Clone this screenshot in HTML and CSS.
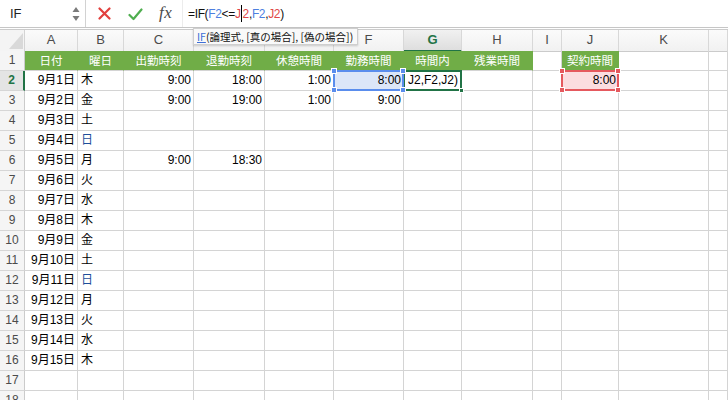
FILE: index.html
```html
<!DOCTYPE html>
<html lang="ja">
<head>
<meta charset="utf-8">
<link rel="stylesheet" href="styles.css">
</head>
<body>
<div class="toolbar">
  <div class="namebox">
    <span class="nb-text">IF</span>
    <svg class="spin" width="8" height="16" viewBox="0 0 8 16"><polygon points="4,1 7.5,6 0.5,6" fill="#7a7a7a"/><polygon points="0.5,10 7.5,10 4,15" fill="#7a7a7a"/></svg>
  </div>
  <div class="icons">
    <svg class="ic-x" width="13" height="13" viewBox="0 0 13 13"><path d="M1.5 1.5 L11.5 11.5 M11.5 1.5 L1.5 11.5" stroke="#e2403e" stroke-width="2.2" stroke-linecap="round"/></svg>
    <svg class="ic-ok" width="15" height="13" viewBox="0 0 15 13"><path d="M1.5 7 L5.5 11 L13.5 1.5" stroke="#4fae4f" stroke-width="2.2" fill="none" stroke-linecap="round" stroke-linejoin="round"/></svg>
    <span class="fx">fx</span>
  </div>
  <div class="formula">=IF(<span class="rb">F2</span>&lt;=<span class="rr">J<i class="caret"></i>2</span>,<span class="rb">F2</span>,<span class="rr">J2</span>)</div>
</div>
<div class="tip"><span class="tip-fn">IF</span>(論理式, [真の場合], [偽の場合])</div>
<div class="sheet">
  <div class="row colhdr">
    <span class="corner"><svg width="25" height="20" viewBox="0 0 25 20"><polygon points="23,3 23,19 9,19" fill="#d9d9d9"/></svg></span>
    <span class="ch">A</span><span class="ch">B</span><span class="ch">C</span><span class="ch">D</span><span class="ch">E</span><span class="ch">F</span><span class="ch act">G</span><span class="ch">H</span><span class="ch">I</span><span class="ch">J</span><span class="ch">K</span><span class="ch"></span>
  </div>
  <div class="row"><span class="rh">1</span><span class="c g">日付</span><span class="c g">曜日</span><span class="c g">出勤時刻</span><span class="c g">退勤時刻</span><span class="c g">休憩時間</span><span class="c g">勤務時間</span><span class="c g">時間内</span><span class="c g">残業時間</span><span class="c"></span><span class="c g">契約時間</span><span class="c"></span><span class="c"></span></div>
  <div class="row"><span class="rh act">2</span><span class="c rt">9月1日</span><span class="c">木</span><span class="c rt">9:00</span><span class="c rt">18:00</span><span class="c rt">1:00</span><span class="c rt selb">8:00<i class="hd tl"></i><i class="hd tr"></i><i class="hd bl"></i><i class="hd br"></i></span><span class="c edit">J2,F2,J2)<i class="fill"></i></span><span class="c"></span><span class="c"></span><span class="c rt selr">8:00<i class="hd tl"></i><i class="hd tr"></i><i class="hd bl"></i><i class="hd br"></i></span><span class="c"></span><span class="c"></span></div>
  <div class="row"><span class="rh">3</span><span class="c rt">9月2日</span><span class="c">金</span><span class="c rt">9:00</span><span class="c rt">19:00</span><span class="c rt">1:00</span><span class="c rt">9:00</span><span class="c"></span><span class="c"></span><span class="c"></span><span class="c"></span><span class="c"></span><span class="c"></span></div>
  <div class="row"><span class="rh">4</span><span class="c rt">9月3日</span><span class="c">土</span><span class="c"></span><span class="c"></span><span class="c"></span><span class="c"></span><span class="c"></span><span class="c"></span><span class="c"></span><span class="c"></span><span class="c"></span><span class="c"></span></div>
  <div class="row"><span class="rh">5</span><span class="c rt">9月4日</span><span class="c sun">日</span><span class="c"></span><span class="c"></span><span class="c"></span><span class="c"></span><span class="c"></span><span class="c"></span><span class="c"></span><span class="c"></span><span class="c"></span><span class="c"></span></div>
  <div class="row"><span class="rh">6</span><span class="c rt">9月5日</span><span class="c">月</span><span class="c rt">9:00</span><span class="c rt">18:30</span><span class="c"></span><span class="c"></span><span class="c"></span><span class="c"></span><span class="c"></span><span class="c"></span><span class="c"></span><span class="c"></span></div>
  <div class="row"><span class="rh">7</span><span class="c rt">9月6日</span><span class="c">火</span><span class="c"></span><span class="c"></span><span class="c"></span><span class="c"></span><span class="c"></span><span class="c"></span><span class="c"></span><span class="c"></span><span class="c"></span><span class="c"></span></div>
  <div class="row"><span class="rh">8</span><span class="c rt">9月7日</span><span class="c">水</span><span class="c"></span><span class="c"></span><span class="c"></span><span class="c"></span><span class="c"></span><span class="c"></span><span class="c"></span><span class="c"></span><span class="c"></span><span class="c"></span></div>
  <div class="row"><span class="rh">9</span><span class="c rt">9月8日</span><span class="c">木</span><span class="c"></span><span class="c"></span><span class="c"></span><span class="c"></span><span class="c"></span><span class="c"></span><span class="c"></span><span class="c"></span><span class="c"></span><span class="c"></span></div>
  <div class="row"><span class="rh">10</span><span class="c rt">9月9日</span><span class="c">金</span><span class="c"></span><span class="c"></span><span class="c"></span><span class="c"></span><span class="c"></span><span class="c"></span><span class="c"></span><span class="c"></span><span class="c"></span><span class="c"></span></div>
  <div class="row"><span class="rh">11</span><span class="c rt">9月10日</span><span class="c">土</span><span class="c"></span><span class="c"></span><span class="c"></span><span class="c"></span><span class="c"></span><span class="c"></span><span class="c"></span><span class="c"></span><span class="c"></span><span class="c"></span></div>
  <div class="row"><span class="rh">12</span><span class="c rt">9月11日</span><span class="c sun">日</span><span class="c"></span><span class="c"></span><span class="c"></span><span class="c"></span><span class="c"></span><span class="c"></span><span class="c"></span><span class="c"></span><span class="c"></span><span class="c"></span></div>
  <div class="row"><span class="rh">13</span><span class="c rt">9月12日</span><span class="c">月</span><span class="c"></span><span class="c"></span><span class="c"></span><span class="c"></span><span class="c"></span><span class="c"></span><span class="c"></span><span class="c"></span><span class="c"></span><span class="c"></span></div>
  <div class="row"><span class="rh">14</span><span class="c rt">9月13日</span><span class="c">火</span><span class="c"></span><span class="c"></span><span class="c"></span><span class="c"></span><span class="c"></span><span class="c"></span><span class="c"></span><span class="c"></span><span class="c"></span><span class="c"></span></div>
  <div class="row"><span class="rh">15</span><span class="c rt">9月14日</span><span class="c">水</span><span class="c"></span><span class="c"></span><span class="c"></span><span class="c"></span><span class="c"></span><span class="c"></span><span class="c"></span><span class="c"></span><span class="c"></span><span class="c"></span></div>
  <div class="row"><span class="rh">16</span><span class="c rt">9月15日</span><span class="c">木</span><span class="c"></span><span class="c"></span><span class="c"></span><span class="c"></span><span class="c"></span><span class="c"></span><span class="c"></span><span class="c"></span><span class="c"></span><span class="c"></span></div>
  <div class="row"><span class="rh">17</span><span class="c"></span><span class="c"></span><span class="c"></span><span class="c"></span><span class="c"></span><span class="c"></span><span class="c"></span><span class="c"></span><span class="c"></span><span class="c"></span><span class="c"></span><span class="c"></span></div>
  <div class="row"><span class="rh">18</span><span class="c"></span><span class="c"></span><span class="c"></span><span class="c"></span><span class="c"></span><span class="c"></span><span class="c"></span><span class="c"></span><span class="c"></span><span class="c"></span><span class="c"></span><span class="c"></span></div>
</div>
</body>
</html>
```
FILE: styles.css
```css
* { box-sizing: border-box; }
html, body { margin: 0; padding: 0; background: #fff; }
body {
  width: 728px; height: 400px; overflow: hidden; position: relative;
  font-family: "Liberation Sans", "Noto Sans CJK JP", sans-serif;
  color: #000;
}
.toolbar {
  height: 28px; display: flex; align-items: stretch;
  border-bottom: 1px solid #c6c6c6; background: #fff;
}
.namebox {
  width: 86px; border-right: 1px solid #d2d2d2;
  display: flex; align-items: center; justify-content: space-between;
  padding: 0 5px 0 10px;
}
.nb-text { font-size: 13px; color: #222; }
.spin { margin-top: 0; }
.icons {
  width: 97px; display: flex; align-items: center;
  padding-left: 12px; border-right: 1px solid #ececec;
}
.ic-x { margin-right: 17px; }
.ic-ok { margin-right: 16px; margin-top: 1px; }
.fx {
  font-family: "Liberation Serif", "DejaVu Serif", serif; font-style: italic;
  font-size: 17px; color: #4a4a4a; letter-spacing: 0.5px; margin-top: -2px;
}
.formula {
  padding-left: 5px; display: flex; align-items: center;
  font-size: 12px; letter-spacing: -0.35px; color: #111; white-space: pre;
}
.rb { color: #4d7fe0; }
.rr { color: #e04848; }
.caret {
  display: inline-block; width: 1px; height: 17px; background: #000;
  vertical-align: -4px; margin: 0 0.5px;
}
.tip {
  position: absolute; left: 193px; top: 28px; width: 165px; height: 17px;
  background: #f9f9f9; border: 1px solid #cfcfcf; box-shadow: 0 1px 2px rgba(0,0,0,0.18);
  font-family: "Noto Sans CJK JP", sans-serif; font-size: 10.5px; line-height: 15px;
  padding-left: 3px; color: #111; z-index: 10; white-space: nowrap;
}
.tip-fn { color: #3d6fd6; text-decoration: underline; }
.sheet { margin-top: 1px; }
.row {
  display: grid; height: 20px;
  grid-template-columns: 25px 53px 46px 70px 71px 69px 70px 58px 71px 29px 57px 90px 1fr;
}
.colhdr {
  height: 22px; border-top: 1px solid #cbcbcb;
}
.corner { background: #f4f4f4; border-right: 1px solid #d4d4d4; border-bottom: 1px solid #cbcbcb; }
.corner svg { display: block; }
.ch {
  background: linear-gradient(#fbfbfb, #f1f1f1);
  border-right: 1px solid #d8d8d8; border-bottom: 1px solid #cbcbcb;
  font-size: 13px; color: #4b4b4b; text-align: center; line-height: 20px;
}
.ch.act {
  background: linear-gradient(#f1f1f1, #dedede);
  color: #217346; font-weight: bold; border-bottom: 2px solid #217346;
}
.rh {
  background: #f5f5f5; border-right: 1px solid #cbcbcb; border-bottom: 1px solid #d6d6d6;
  font-size: 12px; color: #4b4b4b; text-align: center; line-height: 19px;
}
.rh.act {
  background: #e4e4e4; color: #217346; font-weight: bold; border-right: 2px solid #217346;
}
.c {
  border-right: 1px solid #d4d4d4; border-bottom: 1px solid #d4d4d4;
  font-size: 12px; line-height: 19px; padding: 0 3px; white-space: nowrap;
  position: relative;
}
.c.rt { text-align: right; padding-right: 2px; }
.c.g {
  background: #70ad47; color: #fff; text-align: center; border-right-color: #70ad47;
  font-family: "Noto Sans CJK JP", sans-serif; font-size: 11.5px;
}
.c.sun { color: #1f4e9a; }
.selb { background: #dce6f8; z-index: 3; }
.selb::before {
  content: ""; position: absolute; left: -1px; top: -1px; right: -1px; bottom: -1px;
  border: 2px solid #5a8ded;
}
.selr { background: #fbdde0; z-index: 3; }
.selr::before {
  content: ""; position: absolute; left: -1px; top: -1px; right: -1px; bottom: -1px;
  border: 2px solid #e5595e;
}
.hd { position: absolute; width: 6px; height: 6px; border: 1px solid #fff; }
.selb .hd { background: #5a8ded; }
.selr .hd { background: #e5595e; }
.hd.tl { left: -3px; top: -3px; }
.hd.tr { right: -3px; top: -3px; }
.hd.bl { left: -3px; bottom: -3px; }
.hd.br { right: -3px; bottom: -3px; }
.edit { z-index: 2; padding-left: 4px; }
.edit::before {
  content: ""; position: absolute; left: -1px; top: -1px; right: -1px; bottom: -1px;
  border: 2px solid #217346;
}
.fill {
  position: absolute; right: -3px; bottom: -3px; width: 5px; height: 5px;
  background: #217346; border: 1px solid #fff;
}
```
